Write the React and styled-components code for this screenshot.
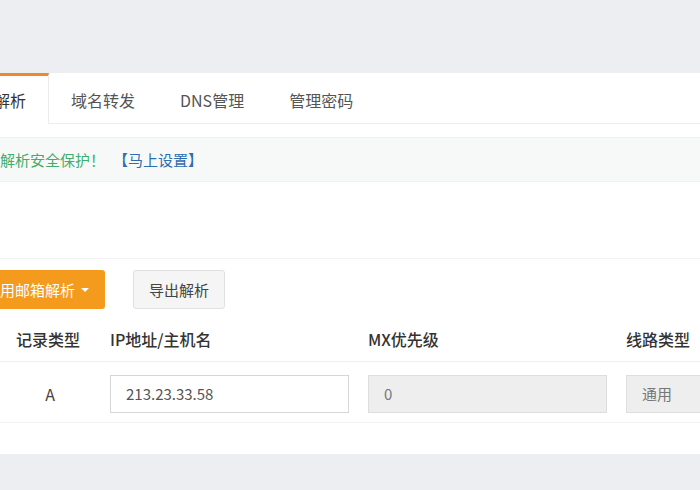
import React from "react";
import styled, { createGlobalStyle } from "styled-components";

const GlobalStyle = createGlobalStyle`
  html, body {
    margin: 0;
    padding: 0;
    background: #eceef2;
    overflow: hidden;
    font-family: "Noto Sans CJK SC", "Noto Sans", sans-serif;
  }
`;

const tabs = ["域名解析", "域名转发", "DNS管理", "管理密码"];

function App() {
  return (
    <>
      <GlobalStyle />
      <Page>
        <Panel>
          <TabBar>
            {tabs.map((t, i) => (
              <Tab key={t} active={i === 0}>
                {t}
              </Tab>
            ))}
          </TabBar>

          <Notice>
            <NoticeText>请开启解析安全保护！</NoticeText>
            <NoticeLink>【马上设置】</NoticeLink>
          </Notice>

          <Toolbar>
            <PrimaryButton>
              启用邮箱解析
              <Caret />
            </PrimaryButton>
            <DefaultButton>导出解析</DefaultButton>
          </Toolbar>

          <Table>
            <HeadRow>
              <HeadCell />
              <HeadCell center>记录类型</HeadCell>
              <HeadCell>IP地址/主机名</HeadCell>
              <HeadCell>MX优先级</HeadCell>
              <HeadCell>线路类型</HeadCell>
            </HeadRow>
            <BodyRow>
              <Cell center>@</Cell>
              <Cell center>A</Cell>
              <Cell>
                <Field>213.23.33.58</Field>
              </Cell>
              <Cell>
                <Field disabled>0</Field>
              </Cell>
              <Cell>
                <Field disabled>通用</Field>
              </Cell>
            </BodyRow>
          </Table>
        </Panel>
      </Page>
    </>
  );
}

export default App;

const Page = styled.div`
  padding-top: 73px;
  height: 490px;
  box-sizing: border-box;
`;

const Panel = styled.div`
  background: #fff;
  height: 381px;
  margin-left: -59px;
  width: 820px;
`;

const TabBar = styled.div`
  display: flex;
  height: 51px;
  margin-left: -1px;
  border-bottom: 1px solid #ececec;
  box-sizing: border-box;
`;

const Tab = styled.div`
  padding: 0 22px;
  display: flex;
  align-items: center;
  font-size: 16px;
  color: ${(p) => (p.active ? "#333" : "#555")};
  border-top: 3px solid ${(p) => (p.active ? "#f0882a" : "transparent")};
  border-right: 1px solid ${(p) => (p.active ? "#ececec" : "transparent")};
  margin-bottom: ${(p) => (p.active ? "-1px" : "0")};
  background: #fff;
`;

const Notice = styled.div`
  margin-top: 13px;
  height: 45px;
  display: flex;
  align-items: center;
  padding-left: 14px;
  background: #f7f8f8;
  border-top: 1px solid #f0f0f0;
  border-bottom: 1px solid #f0f0f0;
  box-sizing: border-box;
  font-size: 15px;
`;

const NoticeText = styled.span`
  color: #3fae6a;
`;

const NoticeLink = styled.span`
  color: #2d6db0;
  margin-left: 8px;
`;

const Toolbar = styled.div`
  margin-top: 76px;
  border-top: 1px solid #f3f3f3;
  padding: 11px 0 0 28px;
  display: flex;
  gap: 28px;
`;

const BaseButton = styled.div`
  height: 39px;
  box-sizing: border-box;
  border-radius: 3px;
  display: flex;
  align-items: center;
  font-size: 15px;
`;

const PrimaryButton = styled(BaseButton)`
  background: #f49b1e;
  color: #fff;
  padding: 0 16px;
`;

const Caret = styled.span`
  margin-left: 6px;
  width: 0;
  height: 0;
  border-left: 4px solid transparent;
  border-right: 4px solid transparent;
  border-top: 4px solid #fff;
`;

const DefaultButton = styled(BaseButton)`
  background: #f5f5f5;
  border: 1px solid #e0e0e0;
  color: #444;
  padding: 0 15px;
`;

const Table = styled.div`
  display: flex;
  flex-direction: column;
`;

const columns = "59px 110px 258px 258px 1fr";

const HeadRow = styled.div`
  display: grid;
  grid-template-columns: ${columns};
  height: 53px;
  align-items: end;
  padding-bottom: 10px;
  box-sizing: border-box;
  border-bottom: 1px solid #efefef;
`;

const HeadCell = styled.div`
  font-size: 16px;
  font-weight: 500;
  color: #333;
  text-align: ${(p) => (p.center ? "center" : "left")};
  padding-right: ${(p) => (p.center ? "14px" : "0")};
`;

const BodyRow = styled.div`
  display: grid;
  grid-template-columns: ${columns};
  height: 61px;
  align-items: center;
  padding-top: 3px;
  box-sizing: border-box;
  border-bottom: 1px solid #f2f2f2;
`;

const Cell = styled.div`
  font-size: 16px;
  color: #444;
  text-align: ${(p) => (p.center ? "center" : "left")};
  padding-right: ${(p) => (p.center ? "10px" : "0")};
`;

const Field = styled.div`
  width: 239px;
  height: 38px;
  box-sizing: border-box;
  border: 1px solid ${(p) => (p.disabled ? "#dedede" : "#d6d6d6")};
  background: ${(p) => (p.disabled ? "#eeeeee" : "#fff")};
  color: ${(p) => (p.disabled ? "#777" : "#555")};
  font-size: 15px;
  display: flex;
  align-items: center;
  padding-left: 15px;
`;
